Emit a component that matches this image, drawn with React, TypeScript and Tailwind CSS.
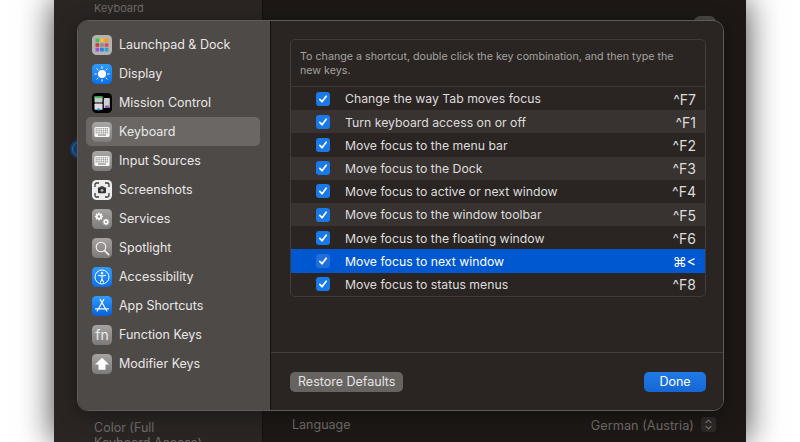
import React from 'react';

const Tile = ({ className, children }: { className: string; children?: React.ReactNode }) => (
  <span className={`flex h-[20px] w-[20px] shrink-0 items-center justify-center overflow-hidden rounded-[4.5px] ${className}`}>
    {children}
  </span>
);

const LaunchpadIcon = () => {
  const colors = ['#34c759', '#f5c02c', '#f59a23', '#e0313a', '#8f8f8f', '#e8415f', '#9a55c9', '#2a7fe8', '#25a6c9'];
  return (
    <Tile className="bg-[#b5b2af]">
      <svg width="20" height="20" viewBox="0 0 20 20">
        {colors.map((c, i) => (
          <rect key={i} x={3.5 + (i % 3) * 4.6} y={3.6 + Math.floor(i / 3) * 4.6} width="3.7" height="3.6" rx="0.6" fill={c} />
        ))}
      </svg>
    </Tile>
  );
};

const DisplayIcon = () => (
  <Tile className="bg-gradient-to-b from-[#2f9bff] to-[#0b6fe8]">
    <svg width="20" height="20" viewBox="0 0 20 20">
      <circle cx="10" cy="10" r="4" fill="#fff" />
      <g stroke="#fff" strokeWidth="1" strokeLinecap="round">
        <path d="M10 2.8v1.6M10 15.6v1.6M2.8 10h1.6M15.6 10h1.6M4.9 4.9l1.1 1.1M14 14l1.1 1.1M4.9 15.1L6 14M14 6l1.1-1.1" />
      </g>
    </svg>
  </Tile>
);

const MissionIcon = () => (
  <Tile className="bg-black">
    <svg width="20" height="20" viewBox="0 0 20 20">
      <rect x="2.5" y="3.5" width="8" height="6" rx="0.7" fill="#c9c9c9" />
      <rect x="2.5" y="3.5" width="8" height="1.7" fill="#34c759" />
      <rect x="11.8" y="5" width="6" height="10" rx="0.7" fill="#cfcfcf" />
      <rect x="13" y="12.6" width="4" height="2.4" fill="#9a55c9" />
      <rect x="2.5" y="10.6" width="8" height="6.2" rx="0.7" fill="#dedede" />
      <rect x="5" y="15.2" width="3" height="2.4" rx="1" fill="#2a9bf0" />
    </svg>
  </Tile>
);

const KeyboardIcon = () => (
  <Tile className="bg-gradient-to-b from-[#a9a7a6] to-[#7f7d7c]">
    <svg width="20" height="20" viewBox="0 0 20 20">
      <rect x="2.4" y="5" width="15.2" height="10" rx="1.5" fill="#f7f7f7" />
      <g fill="#8a8886">
        {[0, 1, 2].map(r =>
          [0, 1, 2, 3, 4, 5, 6].map(c => <rect key={`${r}-${c}`} x={3.6 + c * 1.85} y={6.2 + r * 2} width="1.2" height="1.2" />)
        )}
        <rect x="6" y="12.4" width="8" height="1.2" />
      </g>
    </svg>
  </Tile>
);

const ScreenshotIcon = () => (
  <Tile className="bg-[#ececec]">
    <svg width="20" height="20" viewBox="0 0 20 20" fill="none">
      <path d="M3 7V4.5A1.5 1.5 0 0 1 4.5 3H7M13 3h2.5A1.5 1.5 0 0 1 17 4.5V7M17 13v2.5a1.5 1.5 0 0 1-1.5 1.5H13M7 17H4.5A1.5 1.5 0 0 1 3 15.5V13" stroke="#3a3a3a" strokeWidth="1.3" />
      <rect x="6" y="7.2" width="8" height="6" rx="1" fill="#333" />
      <rect x="8.3" y="6.3" width="3.4" height="1.5" fill="#333" />
      <circle cx="10" cy="10.2" r="1.5" fill="#aaa" />
    </svg>
  </Tile>
);

const Gear = ({ x, y, s }: { x: number; y: number; s: number }) => (
  <g transform={`translate(${x} ${y}) scale(${s})`}>
    <g stroke="#fff" strokeWidth="1.5">
      <path d="M0-4.2V4.2M-4.2 0H4.2M-3-3L3 3M-3 3L3-3" />
    </g>
    <circle r="3" fill="#fff" />
    <circle r="1.3" fill="#8c8a89" />
  </g>
);

const ServicesIcon = () => (
  <Tile className="bg-gradient-to-b from-[#a5a3a2] to-[#7d7b7a]">
    <svg width="20" height="20" viewBox="0 0 20 20">
      <Gear x={7} y={7.5} s={0.95} />
      <Gear x={14} y={13} s={0.8} />
    </svg>
  </Tile>
);

const SpotlightIcon = () => (
  <Tile className="bg-gradient-to-b from-[#a5a3a2] to-[#7d7b7a]">
    <svg width="20" height="20" viewBox="0 0 20 20" fill="none" stroke="#f2f2f2">
      <circle cx="9" cy="9" r="4.8" strokeWidth="1.1" />
      <path d="M12.6 12.6l4 4" strokeWidth="1.5" strokeLinecap="round" />
    </svg>
  </Tile>
);

const AccessibilityIcon = () => (
  <Tile className="bg-gradient-to-b from-[#2f9bff] to-[#0b6fe8]">
    <svg width="20" height="20" viewBox="0 0 20 20" fill="none" stroke="#fff">
      <circle cx="10" cy="10" r="7" strokeWidth="1" />
      <circle cx="10" cy="6.3" r="1.2" fill="#fff" stroke="none" />
      <path d="M6.5 8.3c2.3.7 4.7.7 7 0M10 9v3M10 12l-1.7 3.2M10 12l1.7 3.2" strokeWidth="1.1" strokeLinecap="round" />
    </svg>
  </Tile>
);

const AppStoreIcon = () => (
  <Tile className="bg-gradient-to-b from-[#2f9bff] to-[#0a5fd8]">
    <svg width="20" height="20" viewBox="0 0 20 20" fill="none" stroke="#fff" strokeWidth="1.2" strokeLinecap="round">
      <path d="M11.8 3.5L5.2 15M8.2 3.5L14.8 15M3.5 12.8h13" />
    </svg>
  </Tile>
);

const FnIcon = () => (
  <Tile className="bg-gradient-to-b from-[#a5a3a2] to-[#7d7b7a]">
    <span className="text-[14px] leading-none text-[#ececec]">fn</span>
  </Tile>
);

const ModifierIcon = () => (
  <Tile className="bg-gradient-to-b from-[#a5a3a2] to-[#7d7b7a]">
    <svg width="20" height="20" viewBox="0 0 20 20">
      <path d="M10 3.8L17 10.5H13.5V15.8H6.5V10.5H3z" fill="#fff" />
    </svg>
  </Tile>
);

const sidebar: { label: string; icon: React.ReactNode; active?: boolean }[] = [
  { label: 'Launchpad & Dock', icon: <LaunchpadIcon /> },
  { label: 'Display', icon: <DisplayIcon /> },
  { label: 'Mission Control', icon: <MissionIcon /> },
  { label: 'Keyboard', icon: <KeyboardIcon />, active: true },
  { label: 'Input Sources', icon: <KeyboardIcon /> },
  { label: 'Screenshots', icon: <ScreenshotIcon /> },
  { label: 'Services', icon: <ServicesIcon /> },
  { label: 'Spotlight', icon: <SpotlightIcon /> },
  { label: 'Accessibility', icon: <AccessibilityIcon /> },
  { label: 'App Shortcuts', icon: <AppStoreIcon /> },
  { label: 'Function Keys', icon: <FnIcon /> },
  { label: 'Modifier Keys', icon: <ModifierIcon /> },
];

const shortcuts = [
  { label: 'Change the way Tab moves focus', keys: '^F7' },
  { label: 'Turn keyboard access on or off', keys: '^F1' },
  { label: 'Move focus to the menu bar', keys: '^F2' },
  { label: 'Move focus to the Dock', keys: '^F3' },
  { label: 'Move focus to active or next window', keys: '^F4' },
  { label: 'Move focus to the window toolbar', keys: '^F5' },
  { label: 'Move focus to the floating window', keys: '^F6' },
  { label: 'Move focus to next window', keys: '⌘<', selected: true },
  { label: 'Move focus to status menus', keys: '^F8' },
];

const Check = ({ selected }: { selected?: boolean }) => (
  <span className={`flex h-[14px] w-[14px] items-center justify-center rounded-[3px] ${selected ? 'bg-[#1f6fdc]' : 'bg-[#1a79e8]'}`}>
    <svg width="10" height="10" viewBox="0 0 10 10" fill="none" stroke="#fff" strokeWidth="1.7" strokeLinecap="round" strokeLinejoin="round">
      <path d="M1.8 5.4L4 7.8L8.2 2.2" />
    </svg>
  </span>
);

export default function App() {
  return (
    <div className="relative h-[442px] w-[800px] overflow-hidden bg-white font-['Inter',sans-serif] text-[12.5px]">
      {/* window behind the sheet */}
      <div className="ml-[54px] flex h-[442px] w-[692px] bg-[#1d1816] shadow-[0_0_32px_rgba(0,0,0,0.75)]">
        <div className="relative w-[208px] shrink-0 bg-[#2a2523] pl-[40px] text-[#6d6a68]">
          <p className="pt-[1px] text-[11px] leading-[14px]">Keyboard</p>
          <span className="absolute left-[16px] top-[139px] flex h-[20px] w-[20px] items-center rounded-full bg-[#17457d] pl-[2px]">
            <span className="h-[14px] w-[14px] rounded-full border border-[#4a7099]" />
          </span>
          <p className="absolute left-[40px] top-[420px] w-[110px] leading-[15px]">Color (Full Keyboard Access)</p>
        </div>
        <div className="relative flex-1 border-l border-[#121010] pl-[29px] text-[#6d6a68]">
          <p className="pt-[18px] leading-[15px] text-[#55514f]">Keyboard navigation</p>
          <span className="absolute right-[30px] top-[16px] h-[12px] w-[22px] rounded-full bg-[#4a4745]" />
          <div className="absolute bottom-[7px] left-[29px] right-[30px] flex items-center justify-between">
            <span className="pt-[2px]">Language</span>
            <span className="flex items-center gap-[7px] text-[12.75px]">
              <span className="pt-[2px]">German (Austria)</span>
              <span className="flex h-[15px] w-[15px] items-center justify-center rounded-[3px] bg-[#2c2927]">
                <svg width="9" height="13" viewBox="0 0 9 13" fill="none" stroke="#777" strokeWidth="1.2" strokeLinecap="round" strokeLinejoin="round">
                  <path d="M2 4.7L4.5 2.2L7 4.7M2 8.3L4.5 10.8L7 8.3" />
                </svg>
              </span>
            </span>
          </div>
        </div>
      </div>

      {/* settings sheet */}
      <div className="absolute left-[77px] top-[20px] flex h-[391px] w-[647px] overflow-hidden rounded-[11px] border border-[#5f5b59] shadow-[0_4px_20px_rgba(0,0,0,0.35)]">
        <nav className="flex w-[193px] shrink-0 flex-col border-r border-[#151211] bg-[#4e4a48] pl-[8px] pr-[10px] pt-[9px]">
          {sidebar.map(item => (
            <div
              key={item.label}
              className={`flex h-[29px] items-center gap-[7px] rounded-[5px] pl-[6px] text-[#e9e7e6] ${item.active ? 'bg-[#6b6765]' : ''}`}
            >
              {item.icon}
              <span className="whitespace-nowrap pt-[2px]">{item.label}</span>
            </div>
          ))}
        </nav>
        <div className="flex flex-1 flex-col bg-[#2a2523]">
          <div className="flex-1 pl-[19px] pr-[17px] pt-[18px]">
            <div className="overflow-hidden rounded-[5px] border border-[#403c3a]">
              <p className="h-[47px] border-b border-[#3d3937] px-[9px] pt-[10px] text-[10.7px] leading-[13.5px] text-[#a5a2a0]">
                To change a shortcut, double click the key combination, and then type the new keys.
              </p>
              {shortcuts.map((row, i) => (
                <div
                  key={row.label}
                  className={`flex h-[23.2px] items-center pl-[25px] pr-[9px] text-[12.25px] ${
                    row.selected ? 'bg-[#0058d0] text-white' : i % 2 ? 'bg-[#383331] text-[#dedcdb]' : 'text-[#dedcdb]'
                  }`}
                >
                  <Check selected={row.selected} />
                  <span className="ml-[15px] flex-1 whitespace-nowrap pt-[2px]">{row.label}</span>
                  <span className="pt-[2px] text-[14px] leading-none">{row.keys}</span>
                </div>
              ))}
            </div>
          </div>
          <div className="flex h-[58px] items-start justify-between border-t border-[#433f3d] pl-[19px] pr-[17px] pt-[19px]">
            <button className="h-[20px] rounded-[5px] bg-[#676361] px-[8px] text-[12.5px] leading-[20px] text-[#e6e4e3]">Restore Defaults</button>
            <button className="h-[20px] w-[62px] rounded-[5px] bg-gradient-to-b from-[#2079e4] to-[#1668d4] text-[12.5px] leading-[20px] text-white">Done</button>
          </div>
        </div>
      </div>
    </div>
  );
}
